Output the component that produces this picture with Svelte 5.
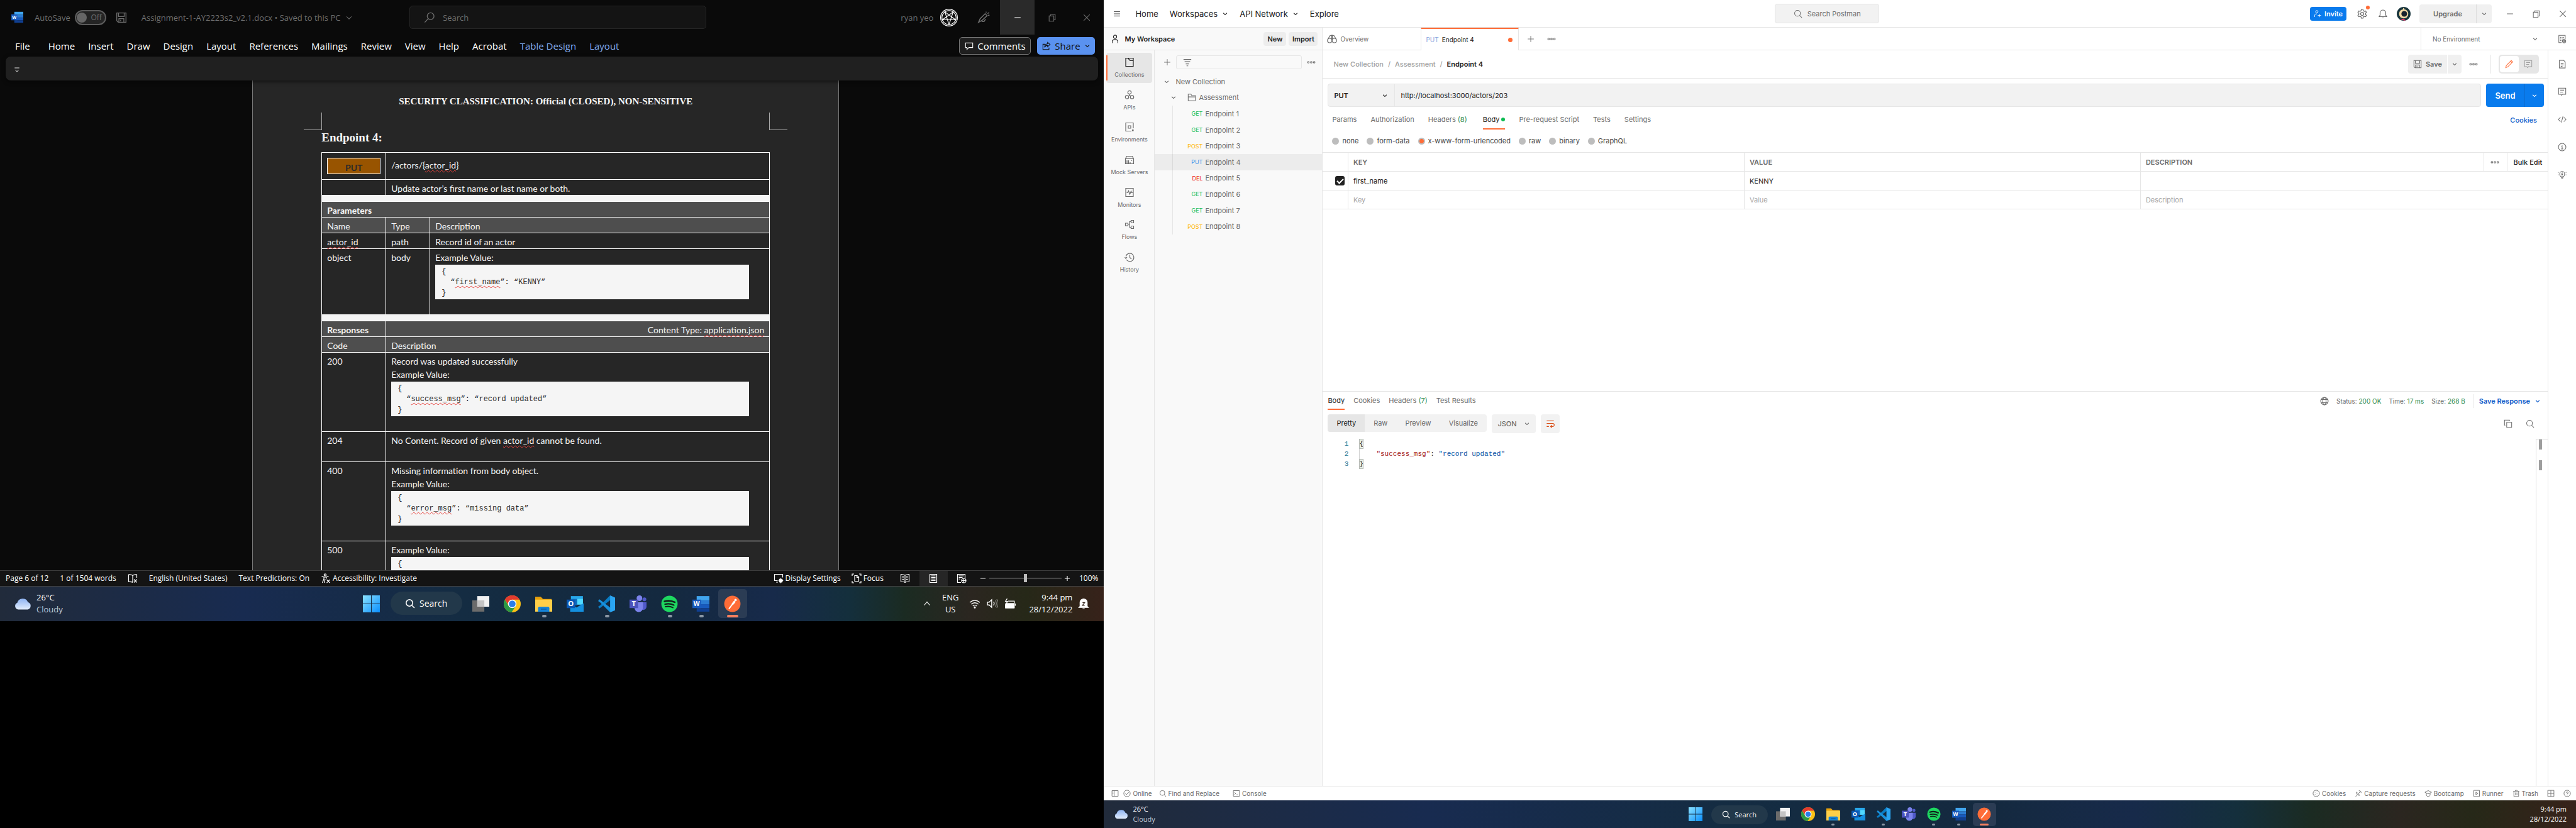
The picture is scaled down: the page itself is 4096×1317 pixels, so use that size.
<script>
  const glyphs = {
    chev: '<path d="M3.5 6l4.5 4.5L12.5 6"/>',
    up: '<path d="M3 11l5-6 5 6"/>',
    search: '<circle cx="7" cy="7" r="5.2"/><path d="M11 11l4 4"/>',
    lsearch: '<circle cx="9.5" cy="6" r="4.8"/><path d="M6 9.500L1.200 14.800"/>',
    floppy: '<path d="M1.500 1.500h13v13h-11l-2-2zM4 1.500v5h8v-5M4.500 14.500v-5h7v5M7 11v2"/>',
    pen: '<path d="M3.500 9.500L10 3l2.500 2.500-6.500 6L1.500 14zM5.500 13h3l2-3M11 1.500l.5-1M13 3l2-1.500M13.500 5h2"/>',
    restore: '<path d="M2.500 5h8.500v9.500H2.500zM5 5V2.500h8.500v9.500H11"/>',
    close: '<path d="M2.500 2.500l11 11M13.500 2.500l-11 11"/>',
    min: '<path d="M2.500 8h11"/>',
    comment: '<path d="M1.500 2.500h13v8.500H7.500L4 14.500V11H1.500z"/>',
    share: '<path d="M6 5H1.500v9.500h11V11M10 1.500l4.500 4-4.500 4V7C7.500 7 6 8 4.500 10.500 4.800 6.500 7 4.500 10 4z"/>',
    pull: '<path d="M3 4h10M4.500 8L8 12l3.500-4"/>',
    proof: '<path d="M8 3.500V14M8 3.500C6 1.500 3.500 2 1.500 2v11.500c2 0 4.500-.5 6.500 1M8 3.500C10 1.500 12 2 14.500 2v5M10 9.500l4.500 5M14.500 9.500l-4.500 5"/>',
    access: '<circle cx="7" cy="2.500" r="1.700"/><path d="M1.500 4.500L5 6v3l-2.500 6M12.500 4.500L9 6v2.500M5 6h4M7 9l-1.500 6M9.500 10l5 5M14.500 10l-5 5"/>',
    display: '<path d="M6.500 11.500h-5v-10h13v5M4 14h3"/><circle cx="11.500" cy="11.500" r="2.500"/><path d="M11.500 7.500v8M7.800 11.500h7.500M9 9l5 5M14 9l-5 5"/>',
    focus: '<path d="M1 4V1h3M12 1h3v3M1 12v3h3M15 12v3h-3M5 3.500h4l2.500 2.500v6.500H5zM8.500 3.500v3h3"/>',
    read: '<path d="M8 3v11.500M8 3C6 1.500 4 1.500 1.500 1.500V13C4 13 6 13 8 14.500M8 3c2-1.500 4-1.500 6.500-1.500V13c-2.500 0-4.500 0-6.500 1.500M3.500 4.500H6M3.500 7H6M3.500 9.500H6M10 4.500h2.500M10 7h2.500M10 9.500h2.500"/>',
    print: '<path d="M2.500 1.500h11v13h-11zM4.500 4h7M4.500 6.500h7M4.500 9h7M4.500 11.500h7"/>',
    web: '<path d="M7 14.500H1.500v-13h12V7M3.500 4h8M3.500 6.500h6M3.500 9H6"/><circle cx="11.500" cy="11.500" r="3.500"/><path d="M8 11.500h7M11.500 8v7"/>',
    wifi: '<path d="M1 6.500a10 10 0 0 1 14 0M3 9a7 7 0 0 1 10 0M5.200 11.500a4 4 0 0 1 5.600 0"/><circle cx="8" cy="13.500" r=".8" fill="currentColor"/>',
    vol: '<path d="M1 6h2.500L7 2.500v11L3.500 10H1zM9.500 5.500a4 4 0 0 1 0 5"/><path opacity=".4" d="M12 3.500a7 7 0 0 1 0 9M14 2a9 9 0 0 1 0 12"/>',
    bat: '<path fill="currentColor" d="M2 8h11v6H2z"/><path d="M5 4.500h9v9.500H1.500V9M15.500 8v3M4 1L1.500 5h3L2.500 8.500"/>',
    bell: '<path fill="currentColor" d="M3 12V6.500a5 5 0 0 1 10 0V12l1.500 1.500h-13z"/><path d="M6.500 15.500h3"/><path stroke="#3a2a20" d="M6.500 6.500h3l-3 4h3"/>',
    burger: '<path d="M1.500 3.500h13M1.500 8h13M1.500 12.500h13"/>',
    plus: '<path d="M8 1.500v13M1.500 8h13"/>',
    dots: '<circle cx="2.700" cy="8" r="1.500"/><circle cx="8" cy="8" r="1.500"/><circle cx="13.300" cy="8" r="1.500"/>',
    user: '<circle cx="8" cy="4" r="3"/><path d="M3 15.500v-3c0-2 1.500-3.500 5-3.500s5 1.500 5 3.500v3"/>',
    filter: '<path d="M1 3h14M3 7h10M5 11h6M6.500 14.500h3"/>',
    collection: '<path d="M2 1.500h12v13H2zM5.500 1.500L9 5.500h5"/>',
    api: '<circle cx="8" cy="4" r="2.700"/><circle cx="4" cy="11.500" r="2.700"/><circle cx="12" cy="11.500" r="2.700"/><path d="M8 6.700v1.500M6.700 9.500L8 8.200l1.300 1.300"/>',
    env: '<path d="M14 10V1.500H2v13h9M6 6h4v4H6z"/><path fill="currentColor" d="M12.500 12.500h1.500V14h-1.500z"/>',
    mock: '<path d="M1.500 6.500h13v8h-13zM1.500 6.500l2-4h9l2 4M4 9v5M6.500 9v5M9 12v2M11.500 9v1"/>',
    monitor: '<path d="M2 1.500h12v13H2zM3.500 8.500h1.500l1.500-3 2 5.500 2-5 1 2.500H13"/>',
    flows: '<path d="M1.500 6h4v4h-4zM10.500 1.500h4v4h-4zM10.500 10.500h4v4h-4zM5.500 8H8M10.500 3.500H8v9h2.500"/>',
    history: '<path d="M3 12a6.500 6.500 0 1 0-.8-5.500M.5 8l1.500 2 2-2M8.500 4v4.500L11 11"/>',
    folder: '<path d="M1.500 14V2h5l1.500 2.500h6.500V14zM1.500 7h13"/>',
    overview: '<circle cx="4.300" cy="10.500" r="3.500"/><circle cx="11.700" cy="10.500" r="3.500"/><path d="M1.500 8.500L4.500 3l3-1v7M14.500 8.500L11.500 3l-3-1v7"/>',
    invite: '<circle cx="6.500" cy="3.500" r="2.500"/><path d="M2 14.500V11c0-2 2-3 4.500-3M12 8v7M8.500 11.500h7"/>',
    gear: '<circle cx="8" cy="8" r="2.500"/><path d="M6.700 1h2.600l.5 2 1.700 1 2-.6 1.300 2.200L13.300 7v2l1.500 1.400-1.300 2.200-2-.6-1.700 1-.5 2H6.700l-.5-2-1.700-1-2 .6-1.300-2.200L2.700 9V7L1.200 5.600l1.300-2.200 2 .6 1.700-1z"/>',
    alarm: '<path d="M2 12.500h12L12.500 10V6.500a4.500 4.500 0 0 0-9 0V10zM6.500 14.500h3"/>',
    envdoc: '<path d="M7 14.500H2v-13h11.500V8M4.500 5h2M8.500 5H11M4.500 8h2M8.500 8h2M4.500 11h2"/><circle cx="11.500" cy="12" r="3"/><circle cx="11.500" cy="12" r="1"/>',
    doc: '<path d="M3 1h7.500L13.500 4v11H3zM5.500 7h5M5.500 9.500h5M5.500 12h3"/>',
    note: '<path d="M1.500 1.500h13v11H8.500L7 14.500l-1.500-2h-4zM4.500 5h7M4.500 8.500h5"/>',
    code: '<path d="M5 4L1 8l4 4M11 4l4 4-4 4M9.500 2.500l-3 11"/>',
    info: '<circle cx="8" cy="8" r="6.800"/><path d="M6.500 7H8v4.500M6 11.500h4M8 4.200v1.200"/>',
    bulb: '<path d="M5.500 11.500C4 10 3.500 8.500 3.500 6.500a4.500 4.500 0 0 1 9 0c0 2-.5 3.500-2 5zM6 13.500h4M6.500 15.500h3M8.500 4L7 7h2L7.500 9.500M.5 3.500l1 .5M.5 8h1M15.500 3.500l-1 .5M15.500 8h-1"/>',
    pencil: '<path d="M1.500 14.500l1-4 9-9 2.500 2.500-9 9zM10 3l2.500 2.500"/>',
    globe: '<circle cx="8" cy="8" r="6.800"/><ellipse cx="8" cy="8" rx="3" ry="6.800"/><path d="M2 5h12M2 11h12"/>',
    copy: '<path d="M5.500 5.500h9v9h-9zM3 10.500H1.500v-9h9V3"/>',
    wrap: '<path d="M1.500 2.500h13M1.500 7.500h11a2.500 2.500 0 0 1 0 5.500H9M11 10.500L8.500 13l2.500 2.500M1.500 13h4"/>',
    panel: '<path d="M1.500 2h13v12h-13zM6 2v12M3 5h1.500M3 8h1.500"/>',
    check: '<circle cx="8" cy="8" r="6.800"/><path d="M4.500 8l2.500 2.500 4.500-5"/>',
    console: '<path d="M1.500 2h13v12h-13zM4 5.500L6.500 8 4 10.500M8 11h4"/>',
    cookie: '<circle cx="8" cy="8" r="6.800"/><path d="M5 5.500h1M9 4.500h1M5 10h1M9 8.500h1M9 12h1"/>',
    sat: '<path d="M4 5a6 6 0 0 0 7 7zM7.500 8.500L11 5M9 2a5 5 0 0 1 5 5M2 15l3-4"/>',
    cap: '<path d="M1 5.500L8 2l7 3.500L8 9zM4 7.500V11c0 2 2 3.500 4 3.500s4-1.500 4-3.500V7.500"/>',
    run: '<path d="M2 1.500h12v13H2zM6.500 5l4 3-4 3z"/>',
    trash: '<path d="M1.500 3.500h13M6 3.500v-2h4v2M3 3.500v11h10v-11M6.500 6v6M9.500 6v6"/>',
    grid: '<path d="M1.500 1.500h13v13h-13zM8 1.500v13M1.500 8h13"/>',
    help: '<circle cx="8" cy="8" r="6.800"/><path d="M6 6.500a2 2 0 1 1 2 2.200v1M8 11.300v1"/>'
  };

  const logos = {
    start: '<defs><linearGradient id="g" x1="0" y1="0" x2="1" y2="1"><stop offset="0" stop-color="#8be2ff"/><stop offset="1" stop-color="#0a8fff"/></linearGradient></defs><path fill="url(#g)" d="M0 0h11.500v11.500H0zM12.500 0H24v11.500H12.500zM0 12.500h11.500V24H0zM12.500 12.500H24V24H12.500z"/>',
    view: '<path fill="#6b6b6b" d="M0 7h17v16H0z"/><path fill="#f2f2f2" d="M7 1h17v15H7z"/><path fill="#c4c4c4" d="M7 7h10v9H7z"/>',
    chrome: '<circle cx="12" cy="12" r="12" fill="#fbc116"/><path fill="#e33b2e" d="M1.600 6a12 12 0 0 1 20.800 0H12L7 14z"/><path fill="#2a9a45" d="M1.600 6a12 12 0 0 0 9.400 18l6-9-10 0z"/><circle cx="12" cy="12" r="6" fill="#fff"/><circle cx="12" cy="12" r="4.700" fill="#2a7de9"/>',
    files: '<path fill="#e8a20c" d="M0 2h8l3 3h12v6H0z"/><path fill="#ffcf48" d="M0 6h24v17H0z"/><path fill="#1583d8" d="M4 23v-5q0-2 2-2h12q2 0 2 2v5z"/><path stroke="#0b4f8c" d="M8 19.500h8"/>',
    outlook: '<path fill="#28a8ea" d="M6 1h17v12H6z"/><path fill="#0f6cbd" d="M6 5h9v9H6z"/><path fill="#50d9ff" d="M15 5h8v8h-8z"/><path fill="#1490df" d="M5 11l9 6 10-6v12H5z"/><path fill="#0a58b5" d="M0 6h12v12H0z"/><text x="6" y="15.500" text-anchor="middle" font-size="10" font-weight="700" fill="#fff">O</text>',
    vscode: '<path fill="#0a7cc4" d="M17 0L3 14 0 16l2 2.500L18 6z"/><path fill="#1990db" d="M17 24L3 10 0 8l2-2.500L18 18z"/><path fill="#2aa5f2" d="M17 0l7 3v18l-7 3z"/>',
    teams: '<circle cx="14" cy="4" r="4" fill="#7b83eb"/><circle cx="21" cy="5.500" r="2.700" fill="#5059c9"/><path fill="#5059c9" d="M16 9.500h8v7a5 5 0 0 1-6 4z"/><path fill="#7b83eb" d="M7 9.500h12v8a6 6 0 0 1-12 0z"/><path fill="#4b53bc" d="M0 6h12v12H0z"/><text x="6" y="15.500" text-anchor="middle" font-size="10" font-weight="700" fill="#fff">T</text>',
    spotify: '<circle cx="12" cy="12" r="11.500" fill="#1ed760"/><g fill="none" stroke="#10221a" stroke-linecap="round"><path stroke-width="2.400" d="M5 8.500q7.500-2.300 14.500 1.200"/><path stroke-width="2" d="M5.700 12.500q6.500-1.800 12.500 1.200"/><path stroke-width="1.700" d="M6.300 16q5.500-1.400 10.500 1.300"/></g>',
    word: '<path fill="#41a5ee" d="M6 1h18v6H6z"/><path fill="#2b7cd3" d="M6 7h18v5.500H6z"/><path fill="#185abd" d="M6 12.500h18V18H6z"/><path fill="#103f91" d="M6 18h18v5H6z"/><path fill="#185abd" d="M0 6h12v12H0z"/><text x="6" y="15.500" text-anchor="middle" font-size="9" font-weight="700" fill="#fff">W</text>',
    postman: '<circle cx="12" cy="12" r="11.500" fill="#ff6c37"/><path stroke="#fff" stroke-width="1.800" stroke-linecap="round" d="M7.500 18.500l5-6.500"/><path stroke="#fff" stroke-width="2.800" stroke-linecap="round" d="M12.500 12l2.500-3"/><circle cx="16.500" cy="6.500" r="1.700" fill="#fff"/>',
    cloud: '<defs><linearGradient id="c" x1="0" y1="0" x2="0" y2="1"><stop offset="0" stop-color="#8fb4f2"/><stop offset="1" stop-color="#e2edfd"/></linearGradient></defs><path fill="url(#c)" d="M5 20a5 5 0 0 1-1-9.500 8 8 0 0 1 15-1A5.500 5.500 0 0 1 19 20z"/>',
    star: '<circle cx="12" cy="12" r="12" fill="#fff"/><circle cx="12" cy="12" r="11" fill="#111"/><circle cx="12" cy="12" r="9.600" fill="none" stroke="#fff"/><path fill="none" stroke="#fff" d="M12 21.500L6.400 4.300 21 15H3L17.600 4.300z"/>',
    astro: '<circle cx="12" cy="12" r="12" fill="#17343c"/><circle cx="12" cy="12" r="8" fill="#f3d9a4"/><circle cx="13" cy="12" r="5" fill="#18222e"/><path fill="#f3d9a4" d="M11 2h2v4h-2z"/><path fill="#e8386d" d="M6 20.500q5 4 9 3l-2-2.500z"/>'
  };

  const tabs = ['Home', 'Insert', 'Draw', 'Design', 'Layout', 'References', 'Mailings', 'Review', 'View', 'Help', 'Acrobat'];
  const apps = [
    ['view', ''], ['chrome', ''], ['files', 'open'], ['outlook', ''], ['vscode', 'open'],
    ['teams', ''], ['spotify', 'open'], ['word', 'open'], ['postman', 'active']
  ];
  const rail = [
    ['Collections', 'collection'], ['APIs', 'api'], ['Environments', 'env'], ['Mock Servers', 'mock'],
    ['Monitors', 'monitor'], ['Flows', 'flows'], ['History', 'history']
  ];
  const endpoints = ['GET', 'GET', 'POST', 'PUT', 'DEL', 'GET', 'GET', 'POST'];
  const modes = ['none', 'form-data', 'x-www-form-urlencoded', 'raw', 'binary', 'GraphQL'];
  const side = ['doc', 'note', 'code', 'info', 'bulb'];
  const footRight = [['Cookies', 'cookie'], ['Capture requests', 'sat'], ['Bootcamp', 'cap'], ['Runner', 'run'], ['Trash', 'trash']];

  let mode = $state('x-www-form-urlencoded');
  let enabled = $state(true);
  let url = $state('http://localhost:3000/actors/203');
  let zoom = $state(50);
</script>

{#snippet icon(name, size = 's14')}
  <svg class="ico {size}" viewBox="0 0 16 16" aria-hidden="true">{@html glyphs[name]}</svg>
{/snippet}

{#snippet logo(name, size = '')}
  <svg class="logo {size}" viewBox="0 0 24 24" aria-hidden="true">{@html logos[name]}</svg>
{/snippet}

{#snippet sample(key, value)}
  <div class="sample">
    <div>{'{'}</div>
    {#if key}
      <div class="pair-line"><span>“</span><span class="typo">{key}</span><span>”: “{value}”</span></div>
      <div>{'}'}</div>
    {/if}
  </div>
{/snippet}

{#snippet taskbar(full)}
  <footer class="taskbar" class:small={!full}>
    <div class="weather">
      {@render logo('cloud')}
      <div><div>26°C</div><div class="dim">Cloudy</div></div>
    </div>
    <nav class="apps">
      <button class="app" aria-label="Start">{@render logo('start')}</button>
      <button class="find">{@render icon('search', 's16')}Search</button>
      {#each apps as [name, state]}
        <button class="app {state}" aria-label={name}>{@render logo(name)}</button>
      {/each}
    </nav>
    <div class="tray">
      {#if full}
        {@render icon('up', 's14')}
        <div class="lang">ENG<br />US</div>
        <div class="status-icons">{@render icon('wifi', 's18')}{@render icon('vol', 's18')}{@render icon('bat', 's18')}</div>
      {/if}
      <div class="clock">9:44 pm<br />28/12/2022</div>
      {#if full}{@render icon('bell', 's18')}{/if}
    </div>
  </footer>
{/snippet}

<div class="desktop">
  <div class="screen-left">
    <section class="word">
      <header class="title">
        <div class="title-file">
          {@render logo('word', 'l20')}
          <span>AutoSave</span>
          <button class="toggle" aria-label="AutoSave"><i></i>Off</button>
          {@render icon('floppy', 's18')}
          <span class="filename">Assignment-1-AY2223s2_v2.1.docx • Saved to this PC</span>
          {@render icon('chev', 's14')}
        </div>
        <label class="word-search">{@render icon('lsearch', 's18')}<input placeholder="Search" aria-label="Search" /></label>
        <div class="title-user">
          <span>ryan yeo</span>
          {@render logo('star', 'l28')}
          <button class="pen" aria-label="Pen">{@render icon('pen', 's20')}</button>
          <button class="win lit" aria-label="Minimise">{@render icon('min', 's14')}</button>
          <button class="win" aria-label="Restore">{@render icon('restore', 's14')}</button>
          <button class="win" aria-label="Close">{@render icon('close', 's14')}</button>
        </div>
      </header>
      <nav class="ribbon-tabs">
        <button class="file">File</button>
        {#each tabs as t}<button>{t}</button>{/each}
        <button class="ctx">Table Design</button>
        <button class="ctx">Layout</button>
        <span class="grow"></span>
        <button class="comments">{@render icon('comment')}Comments</button>
        <button class="share">{@render icon('share')}Share{@render icon('chev', 's10')}</button>
      </nav>
      <div class="ribbon"><button aria-label="Expand ribbon">{@render icon('pull', 's12')}</button></div>
      <div class="doc">
        <article class="page">
          <p class="class">SECURITY CLASSIFICATION: Official (CLOSED), NON-SENSITIVE</p>
          <div class="marks"><i class="l"></i><i class="r"></i></div>
          <h2>Endpoint 4:</h2>
          <table class="spec">
            <colgroup><col class="c1" /><col class="c2" /><col /></colgroup>
            <tbody>
              <tr class="verb"><td><span class="put">PUT</span></td><td colspan="2">/actors/&#123;<span class="typo">actor_id</span>&#125;</td></tr>
              <tr><td></td><td colspan="2">Update actor’s first name or last name or both.</td></tr>
              <tr class="band"><td colspan="3"></td></tr>
              <tr class="head"><th colspan="3">Parameters</th></tr>
              <tr class="head"><td>Name</td><td>Type</td><td>Description</td></tr>
              <tr><td><span class="typo">actor_id</span></td><td>path</td><td>Record id of an actor</td></tr>
              <tr class="t105"><td>object</td><td>body</td><td>Example Value:{@render sample('first_name', 'KENNY')}</td></tr>
              <tr class="band"><td colspan="3"></td></tr>
              <tr class="head"><th>Responses</th><td colspan="2" class="right">Content Type: <span class="typo">application.json</span></td></tr>
              <tr class="head"><td>Code</td><td colspan="2">Description</td></tr>
              <tr class="t126"><td>200</td><td colspan="2">Record was updated successfully<br />Example Value:{@render sample('success_msg', 'record updated')}</td></tr>
              <tr class="t48"><td>204</td><td colspan="2">No Content. Record of given <span class="typo">actor_id</span> cannot be found.</td></tr>
              <tr class="t126"><td>400</td><td colspan="2">Missing information from body object.<br />Example Value:{@render sample('error_msg', 'missing data')}</td></tr>
              <tr class="t126"><td>500</td><td colspan="2">Example Value:{@render sample()}</td></tr>
            </tbody>
          </table>
        </article>
      </div>
      <div class="status">
        <div class="counts">
          <span>Page 6 of 12</span><span>1 of 1504 words</span>{@render icon('proof', 's16')}
          <span>English (United States)</span><span>Text Predictions: On</span>
          <span class="pair">{@render icon('access', 's16')}Accessibility: Investigate</span>
        </div>
        <div class="views">
          <span class="pair">{@render icon('display', 's16')}Display Settings</span>
          <span class="pair foc">{@render icon('focus', 's16')}Focus</span>
          <button aria-label="Read mode">{@render icon('read', 's16')}</button>
          <button class="on" aria-label="Print layout">{@render icon('print', 's16')}</button>
          <button aria-label="Web layout">{@render icon('web', 's16')}</button>
          {@render icon('min', 's12')}
          <input type="range" bind:value={zoom} aria-label="Zoom" />
          {@render icon('plus', 's10')}
          <span class="pct">100%</span>
        </div>
      </div>
    </section>
    {@render taskbar(true)}
  </div>

  <div class="screen-right">
    <section class="postman">
      <header class="top">
        <nav>
          {@render icon('burger', 's12')}
          <a href="#home" class="home">Home</a>
          <a href="#ws">Workspaces {@render icon('chev', 's10')}</a>
          <a href="#api">API Network {@render icon('chev', 's10')}</a>
          <a href="#explore">Explore</a>
        </nav>
        <button class="pm-search">{@render icon('search')}Search Postman</button>
        <div class="acct">
          <button class="invite">{@render icon('invite', 's12')}Invite</button>
          <span class="gear">{@render icon('gear', 's16')}</span>
          {@render icon('alarm', 's16')}
          {@render logo('astro', 'l22')}
          <div class="upgrade"><button>Upgrade</button><button aria-label="Plans">{@render icon('chev', 's10')}</button></div>
          <button class="ctl" aria-label="Minimise">{@render icon('min')}</button>
          <button class="ctl" aria-label="Restore">{@render icon('restore')}</button>
          <button class="ctl" aria-label="Close">{@render icon('close')}</button>
        </div>
      </header>

      <aside class="sidebar">
        <div class="ws">{@render icon('user')}<b>My Workspace</b><button>New</button><button>Import</button></div>
        <div class="ws-body">
          <nav class="rail">
            {#each rail as [name, g], i}
              <button class:on={i === 0}>{@render icon(g, 's16')}<span>{name}</span></button>
            {/each}
          </nav>
          <div class="tree">
            <div class="tree-bar">
              <button aria-label="Add">{@render icon('plus', 's12')}</button>
              <label>{@render icon('filter')}<input aria-label="Filter" /></label>
              <button aria-label="More">{@render icon('dots')}</button>
            </div>
            <div class="rows">
              <button class="n0">{@render icon('chev', 's10')}New Collection</button>
              <button class="n1">{@render icon('chev', 's10')}{@render icon('folder')}<span>Assessment</span></button>
              {#each endpoints as m, i}
                <button class="ep" class:sel={i === 3}><span class="m {m}">{m}</span>Endpoint {i + 1}</button>
              {/each}
            </div>
          </div>
        </div>
      </aside>

      <main>
        <div class="tabbar">
          <button class="tab">{@render icon('overview', 's16')}Overview</button>
          <button class="tab cur"><span class="PUT">PUT</span>Endpoint 4<i></i></button>
          <button class="sq" aria-label="New tab">{@render icon('plus', 's12')}</button>
          <button class="sq" aria-label="Tabs">{@render icon('dots')}</button>
          <span class="fill"></span>
          <button class="noenv">No Environment{@render icon('chev', 's10')}</button>
          <button class="eye" aria-label="Environment">{@render icon('envdoc')}</button>
        </div>
        <div class="work">
          <div class="panes">
            <section class="request">
              <div class="crumbs">
                <span>New Collection</span><i>/</i><span>Assessment</span><i>/</i><b>Endpoint 4</b>
                <span class="grow"></span>
                <button class="save">{@render icon('floppy')}Save</button>
                <button class="save-more" aria-label="Save options">{@render icon('chev', 's10')}</button>
                <button class="more" aria-label="More">{@render icon('dots')}</button>
                <div class="modes"><button class="on" aria-label="Edit">{@render icon('pencil')}</button><button aria-label="Comments">{@render icon('note')}</button></div>
              </div>
              <div class="url">
                <div class="urlbox">
                  <label><select aria-label="Method"><option>PUT</option></select>{@render icon('chev', 's10')}</label>
                  <input bind:value={url} aria-label="Request URL" />
                </div>
                <div class="send"><button>Send</button><button aria-label="Send options">{@render icon('chev', 's10')}</button></div>
              </div>
              <div class="rtabs">
                <button>Params</button><button>Authorization</button><button>Headers <em>(8)</em></button>
                <button class="on">Body<i></i></button><button>Pre-request Script</button><button>Tests</button><button>Settings</button>
                <span class="grow"></span><a href="#cookies">Cookies</a>
              </div>
              <div class="radios">
                {#each modes as m}
                  <label><input type="radio" name="mode" value={m} bind:group={mode} />{m}</label>
                {/each}
              </div>
              <table class="kv">
                <colgroup><col class="k0" /><col class="k1" /><col class="k1" /><col /><col class="k4" /><col class="k5" /></colgroup>
                <thead>
                  <tr><th></th><th>KEY</th><th>VALUE</th><th>DESCRIPTION</th><th class="ctr">{@render icon('dots')}</th><th class="ctr"><button>Bulk Edit</button></th></tr>
                </thead>
                <tbody>
                  <tr>
                    <td><input type="checkbox" bind:checked={enabled} aria-label="Enable row" /></td>
                    <td><input value="first_name" aria-label="Key" /></td><td><input value="KENNY" aria-label="Value" /></td>
                    <td colspan="3"><input aria-label="Description" /></td>
                  </tr>
                  <tr>
                    <td></td><td><input placeholder="Key" aria-label="New key" /></td><td><input placeholder="Value" aria-label="New value" /></td>
                    <td colspan="3"><input placeholder="Description" aria-label="New description" /></td>
                  </tr>
                </tbody>
              </table>
            </section>

            <section class="response">
              <div class="stabs">
                <button class="on">Body</button><button>Cookies</button><button>Headers <em>(7)</em></button><button>Test Results</button>
                <span class="grow"></span>
                <div class="stats">
                  {@render icon('globe')}
                  <span>Status: <em>200 OK</em></span><span>Time: <em>17 ms</em></span><span>Size: <em>268 B</em></span>
                  <button class="saver">Save Response {@render icon('chev', 's10')}</button>
                </div>
              </div>
              <div class="fmt">
                <div class="seg"><button class="on">Pretty</button><button>Raw</button><button>Preview</button><button>Visualize</button></div>
                <button class="json">JSON {@render icon('chev', 's10')}</button>
                <button class="wrap" aria-label="Wrap lines">{@render icon('wrap')}</button>
                <span class="grow"></span>
                <button aria-label="Copy">{@render icon('copy')}</button>
                <button aria-label="Search">{@render icon('search')}</button>
              </div>
              <div class="code">
                <div class="nums"><div>1</div><div>2</div><div>3</div></div>
                <div class="lines">
                  <div><mark>{'{'}</mark></div>
                  <div class="in"><span class="key">"success_msg"</span>: <span class="str">"record updated"</span></div>
                  <div><mark>{'}'}</mark></div>
                </div>
                <div class="map"><i></i><i></i></div>
              </div>
            </section>
          </div>
          <nav class="side">
            {#each side as s}<button aria-label={s}>{@render icon(s)}</button>{/each}
          </nav>
        </div>
      </main>

      <footer class="foot">
        <button aria-label="Sidebar">{@render icon('panel', 's12')}</button>
        <button>{@render icon('check', 's12')}Online</button>
        <button class="fr">{@render icon('search', 's12')}Find and Replace</button>
        <button class="con">{@render icon('console', 's12')}Console</button>
        <span class="grow"></span>
        {#each footRight as [name, g]}<button>{@render icon(g, 's12')}{name}</button>{/each}
        <button aria-label="Layout">{@render icon('grid', 's12')}</button>
        <button aria-label="Help">{@render icon('help', 's12')}</button>
      </footer>
    </section>
    {@render taskbar(false)}
  </div>
</div>

<style>
  :global(body) { margin: 0; background: #000; }
  .desktop { display: grid; grid-template-columns: minmax(0, 3fr) minmax(0, 4fr); height: 100vh; overflow: hidden; box-sizing: border-box; }
  .desktop :global(*) { box-sizing: border-box; }
  button, input, select { font: inherit; color: inherit; background: none; border: 0; padding: 0; margin: 0; outline: 0; min-width: 0; }
  button { display: inline-flex; align-items: center; justify-content: center; white-space: nowrap; }
  a { color: inherit; text-decoration: none; }
  em, i { font-style: normal; }
  .grow { flex: 1; }
  .ico { fill: none; stroke: currentColor; stroke-width: 1.2; flex: none; display: block; }
  .s10 { width: 10px; height: 10px; stroke-width: 1.8; }
  .s12 { width: 12px; height: 12px; }
  .s14 { width: 14px; height: 14px; }
  .s16 { width: 16px; height: 16px; }
  .s18 { width: 18px; height: 18px; }
  .s20 { width: 20px; height: 20px; }
  .logo { display: block; flex: none; width: 27px; height: 27px; font-family: "Open Sans", sans-serif; }
  .logo.l20 { width: 19px; height: 19px; }
  .logo.l22 { width: 22px; height: 22px; }
  .logo.l28 { width: 28px; height: 28px; }

  .screen-left { display: grid; grid-template-rows: minmax(0, 17fr) minmax(0, 1fr) minmax(0, 6fr); min-height: 0; height: 100vh; background: #000; font-family: "Open Sans", sans-serif; }
  .screen-right { display: grid; grid-template-rows: minmax(0, 1fr) 44px; height: 100vh; }

  /* Word */
  .word { display: grid; grid-template-rows: 55px 35px 38px minmax(0, 1fr) 25px; background: #0a0a0a; color: #fff; min-height: 0; }
  .title { display: grid; grid-template-columns: 651fr 472fr 632fr; align-items: center; color: #6e6e6e; font-size: 13px; }
  .title-file { display: flex; align-items: center; padding-left: 18px; gap: 7px; white-space: nowrap; }
  .title-file .logo { margin-right: 11px; }
  .toggle { width: 50px; height: 24px; border: 2px solid #5c5c5c; border-radius: 12px; background: #242424; justify-content: space-between; padding: 0 5px 0 1px; font-size: 12px; margin-right: 8px; }
  .toggle i { width: 16px; height: 16px; border-radius: 50%; background: #666; }
  .filename { margin-left: 16px; }
  .word-search { height: 37px; display: flex; align-items: center; gap: 12px; padding-left: 22px; background: #141414; border: 1px solid #262626; border-radius: 5px; }
  .word-search input { flex: 1; }
  input::placeholder { color: inherit; opacity: 1; }
  .title-user { display: flex; align-items: center; justify-content: flex-end; height: 55px; }
  .title-user .logo { margin: 0 31px 0 11px; }
  .pen { margin-right: 16px; }
  .win { width: 55px; height: 55px; }
  .lit { background: #2a2a2a; color: #fff; }
  .ribbon-tabs { display: flex; align-items: center; gap: 21px; padding: 0 14px 0 24px; font-size: 15px; }
  .file { margin-right: 8px; }
  .ctx { color: #82aaf0; }
  .comments { height: 28px; width: 114px; gap: 6px; border: 1px solid #777; border-radius: 5px; background: #1f1f1f; margin-right: -11px; }
  .share { height: 28px; width: 92px; gap: 6px; border-radius: 5px; background: #5a92f0; color: #111; }
  .ribbon { margin: 0 9px; background: #202020; border-radius: 8px; display: flex; align-items: center; padding: 4px 0 0 12px; z-index: 1; box-shadow: 0 2px 6px #0008; }
  .doc { display: flex; justify-content: center; padding-right: 20px; overflow: hidden; border-bottom: 1px solid #3c3c3c; }
  .page { width: 933px; height: max-content; padding: 22px 109px 0; background: #262626; border: 1px solid #777; border-width: 0 1px; color: #f5f5f5; }
  .class { margin: 0; font: bold 15px/22px "Liberation Serif", serif; text-align: center; white-space: nowrap; }
  .marks { display: flex; justify-content: space-between; margin: 7px -28px 0; }
  .marks i { width: 29px; height: 28px; border: 0 solid #aaa; border-bottom-width: 1px; }
  .marks .l { border-right-width: 1px; }
  .marks .r { border-left-width: 1px; }
  h2 { margin: 0 0 11px; font: bold 19px/24px "Liberation Serif", serif; }
  .spec { width: 100%; table-layout: fixed; border-collapse: collapse; font: 14px/21px Lato, sans-serif; }
  .c1 { width: 102px; }
  .c2 { width: 70px; }
  .spec td, .spec th { border: 1px solid #fff; padding: 3px 8px 0; vertical-align: top; text-align: left; height: 25px; }
  .spec .verb td { height: 43px; padding-top: 8px; }
  .spec .verb td:nth-child(2) { padding-top: 9px; }
  .spec .band td { height: 10px; padding: 0; background: #f5f5f5; line-height: 1px; }
  .head td, .head th { background: #4e4e4e; }
  .spec .right { text-align: right; }
  .spec .t105 td { height: 105px; }
  .spec .t126 td { height: 126px; }
  .spec .t48 td { height: 48px; }
  .put { display: flex; align-items: center; justify-content: center; height: 26px; background: #985400; border: 1px solid #fff; color: #2a2a2a; font-weight: 700; padding-top: 4px; }
  .typo { text-decoration: underline wavy #e8413c 1px; text-underline-offset: 2px; text-decoration-skip-ink: none; }
  .sample { margin: 1px 24px 0 0; height: 55px; padding: 3px 10px; background: #f5f5f5; color: #2a2a2a; font: 12px/17px "Liberation Mono", monospace; }
  .pair-line { display: flex; padding-left: 14px; white-space: pre; }
  .status { display: flex; justify-content: space-between; background: #141414; font-size: 12px; border-bottom: 1px solid #444; padding: 0 9px; white-space: nowrap; }
  .status > div { display: flex; align-items: center; gap: 18px; }
  .pair { display: flex; align-items: center; gap: 3px; }
  .views > .foc { margin-right: 16px; }
  .status .views { gap: 0; }
  .views > .pair { margin-right: 17px; }
  .views button { width: 45px; height: 24px; }
  .views button + .ico { margin-left: 5px; }
  .views .on { background: #262626; }
  .views button:nth-of-type(1) { width: 46px; margin-left: -6px; }
  input[type="range"] { appearance: none; width: 115px; height: 14px; margin: 0 4px; background: linear-gradient(#aaa, #aaa) center / 100% 1px no-repeat; }
  input[type="range"]::-webkit-slider-thumb { appearance: none; width: 5px; height: 13px; background: #bbb; }
  .pct { margin-left: 14px; }

  /* Taskbar */
  .taskbar { display: grid; grid-template-columns: 1fr auto 1fr; align-items: center; color: #fff; font-size: 13px; line-height: 19px; font-family: "Open Sans", sans-serif; background: linear-gradient(90deg, #212b3b, #182b50 22%, #142c42 42%, #14293f 60%, #172a4a 70%, #142f3c 77%, #1b2b22 82%, #2b2620 88%, #262818 93%, #37221a); min-height: 0; }
  .weather { display: flex; align-items: center; gap: 8px; padding-left: 23px; }
  .dim { color: #c2cad6; }
  .apps { display: flex; gap: 4px; }
  .app { width: 46px; height: 46px; border-radius: 5px; position: relative; }
  .find { width: 114px; height: 37px; margin: 4px 3px 0; gap: 7px; border-radius: 19px; background: #22384a; font-size: 14px; }
  .find .ico { stroke-width: 1.6; }
  .active { background: #2b3c54; }
  .open::after, .active::after { content: ""; position: absolute; bottom: 1px; left: 50%; width: 7px; height: 4px; margin-left: -3px; border-radius: 2px; background: #8c98a6; }
  .active::after { width: 18px; margin-left: -9px; background: #f8805f; }
  .tray { display: flex; align-items: center; justify-content: flex-end; padding-right: 23px; text-align: right; }
  .lang { text-align: center; margin: 0 17px; }
  .status-icons { display: flex; gap: 10px; margin-right: 21px; }
  .clock + .ico { margin-left: 9px; }
  .small { font-size: 11px; line-height: 16px; }
  .small .logo { width: 22px; height: 22px; }
  .small .weather { padding-left: 17px; gap: 7px; }
  .small .apps { gap: 3px; }
  .small .app { width: 37px; height: 37px; }
  .small .find { width: 90px; height: 30px; margin-top: 4px; font-size: 11px; }
  .small .find .ico { width: 13px; height: 13px; }
  .small .open::after { width: 5px; height: 3px; }
  .small .active::after { width: 14px; height: 3px; margin-left: -7px; }
  .small .tray { padding-right: 15px; }

  /* Postman */
  .postman { display: grid; grid-template: 44px minmax(0, 1fr) 23px / 348px minmax(0, 1fr); background: #fff; font-family: Inter, sans-serif; font-size: 11px; color: #6b6b6b; min-height: 0; }
  .top { grid-column: 1 / -1; display: grid; grid-template-columns: 1067fr 166px 1108fr; align-items: center; border-bottom: 1px solid #e6e6e6; }
  .top nav { display: flex; align-items: center; gap: 18px; padding-left: 15px; font-size: 13px; color: #212121; }
  .top nav a { display: flex; align-items: center; gap: 7px; }
  .top .home { margin-left: 5px; }
  .pm-search { height: 31px; gap: 8px; background: #f2f2f2; border: 1px solid #e6e6e6; border-radius: 4px; }
  .acct { display: flex; align-items: center; justify-content: flex-end; padding-right: 14px; gap: 14px; }
  .invite { width: 58px; height: 22px; gap: 5px; background: #097bed; color: #fff; font-weight: 600; border-radius: 4px; }
  .gear { position: relative; margin: 0 3px; }
  .gear::after { content: ""; position: absolute; right: -4px; top: -5px; width: 6px; height: 6px; border-radius: 50%; background: #ff6c37; }
  .upgrade { display: flex; height: 30px; background: #f0f0f0; border-radius: 4px; font-weight: 600; margin-right: -6px; }
  .upgrade button:first-child { width: 91px; border-right: 1px solid #ddd; }
  .upgrade button:last-child { width: 24px; }
  .ctl { margin-left: 14px; }
  .sidebar { display: grid; grid-template-rows: 36px minmax(0, 1fr); background: #f9f9f9; border-right: 1px solid #e6e6e6; }
  .ws { display: flex; align-items: center; padding: 0 7px 0 11px; gap: 4px; border-bottom: 1px solid #e6e6e6; color: #212121; }
  .ws b { font-weight: 600; flex: 1; padding-left: 4px; }
  .ws button { height: 22px; background: #ededed; border-radius: 4px; font-weight: 600; width: 46px; }
  .ws b + button { width: 36px; }
  .ws-body { display: grid; grid-template-columns: 80px minmax(0, 1fr); }
  .rail { display: grid; grid-template-rows: repeat(7, 1fr); height: 358px; margin: 4px 3px 0 4px; row-gap: 4px; }
  .rail button { flex-direction: column; gap: 6px; font-size: 9px; line-height: 12px; border-radius: 4px; position: relative; }
  .rail .on { background: #e6e6e6; color: #212121; }
  .rail .on span { color: #6b6b6b; }
  .rail .on::before { content: ""; position: absolute; left: 0; top: 4px; bottom: 4px; width: 2px; background: #ff6c37; }
  .tree { border-left: 1px solid #e6e6e6; }
  .tree-bar { display: flex; align-items: center; padding: 8px 10px 7px 14px; gap: 8px; }
  .tree-bar label { flex: 1; display: flex; align-items: center; height: 22px; border: 1px solid #e6e6e6; border-radius: 3px; padding-left: 10px; }
  .tree-bar input { width: 0; flex: 1; }
  .rows { display: grid; grid-template-rows: repeat(10, 1fr); height: 256px; background: linear-gradient(#e6e6e6, #e6e6e6) 28px 51px / 1px 205px no-repeat; }
  .rows button { justify-content: flex-start; }
  .n0 { padding-left: 14px; gap: 9px; }
  .n1 { padding-left: 25px; gap: 17px; }
  .n1 span { margin-left: -13px; }
  .ep { gap: 4px; }
  .ep.sel { background: #0000000d; }
  .m { width: 76px; text-align: right; font-size: 9px; }
  .GET { color: #0cbb52; }
  .POST { color: #ffb400; }
  .PUT { color: #3d93ea; }
  .DEL { color: #eb2013; }

  main { display: grid; grid-template-rows: 36px minmax(0, 1fr); min-width: 0; }
  .tabbar { display: flex; font-size: 10px; }
  .tabbar > * { border-bottom: 1px solid #e6e6e6; }
  .tab { width: 156px; justify-content: flex-start; padding-left: 7px; gap: 5px; }
  .tabbar .cur { border: 1px solid #e6e6e6; border-width: 2px 1px 0; border-top-color: #ff6c37; padding-right: 9px; color: #212121; }
  .cur .PUT { color: #8aa4dd; }
  .cur i { margin-left: auto; width: 7px; height: 7px; border-radius: 50%; background: #ff6c37; }
  .sq { width: 37px; }
  .sq + .sq { width: 30px; }
  .tabbar .fill { flex: 1; }
  .noenv { width: 202px; border-left: 1px solid #e6e6e6; justify-content: space-between; padding: 0 15px 0 18px; }
  .eye { width: 45px; }
  .work { display: grid; grid-template-columns: minmax(0, 1fr) 45px; }
  .side { border-left: 1px solid #e6e6e6; display: flex; flex-direction: column; }
  .side button { height: 44px; }
  .panes { display: grid; grid-template-rows: 542fr 628fr; min-height: 0; }
  .crumbs { display: flex; align-items: center; height: 45px; border-bottom: 1px solid #e6e6e6; padding: 0 14px 0 17px; color: #a0a0a0; font-weight: 500; }
  .crumbs > i { margin: 0 7px; }
  .crumbs b { color: #212121; font-weight: 600; }
  .save { width: 62px; height: 30px; gap: 6px; background: #f0f0f0; border-radius: 4px 0 0 4px; color: #6b6b6b; font-weight: 600; }
  .save-more { width: 22px; height: 30px; background: #f0f0f0; border-radius: 0 4px 4px 0; margin-left: 1px; color: #6b6b6b; }
  .more { width: 47px; height: 30px; border-right: 1px solid #e6e6e6; margin-right: 12px; color: #6b6b6b; padding-right: 8px; }
  .modes { display: flex; height: 30px; padding: 2px; background: #e6e6e6; border-radius: 5px; }
  .modes button { width: 30px; }
  .modes .on { background: #fff; color: #ff6c37; border-radius: 4px; }
  .url { display: flex; gap: 8px; padding: 8px 6px 0 8px; height: 45px; }
  .urlbox { flex: 1; display: flex; background: #f2f2f2; border: 1px solid #e6e6e6; border-radius: 4px; color: #212121; }
  .urlbox label { width: 106px; display: flex; align-items: center; justify-content: space-between; padding: 0 10px 0 9px; border-right: 1px solid #e6e6e6; font-weight: 600; }
  select { appearance: none; flex: 1; }
  .urlbox > input { flex: 1; padding-left: 9px; }
  .send { display: flex; background: #097bed; color: #fff; border-radius: 4px; font-size: 13px; font-weight: 600; }
  .send button:first-child { width: 62px; border-right: 1px solid #0a6bd0; }
  .send button:last-child { width: 30px; }
  .rtabs { display: flex; align-items: center; gap: 22px; height: 36px; padding: 6px 17px 0 15px; }
  .rtabs button, .stabs > button { height: 100%; border-bottom: 2px solid transparent; white-space: pre; }
  .rtabs button:nth-child(3) { margin-right: 3px; }
  em { color: #2d8a4e; }
  .rtabs .on, .stabs .on { border-color: #ff6c37; color: #212121; }
  .rtabs i { width: 6px; height: 6px; margin-left: 3px; border-radius: 50%; background: #0cbb52; }
  .rtabs a { color: #0f5cc9; font-weight: 500; }
  .radios { display: flex; align-items: center; gap: 13px; height: 36px; padding-left: 15px; color: #444; }
  .radios label { display: flex; align-items: center; gap: 5px; }
  input[type="radio"] { appearance: none; width: 11px; height: 11px; border-radius: 50%; background: #bdbdbd; }
  input[type="radio"]:checked { background: radial-gradient(circle, #ff6c37 3px, #bdbdbd 4px); }
  .kv { width: 100%; table-layout: fixed; border-collapse: collapse; }
  .kv th, .kv td { height: 30px; padding: 0 0 0 8px; border: 1px solid #e6e6e6; text-align: left; font-weight: 400; color: #212121; }
  .kv tr > :first-child { border-left: 0; }
  .kv tr > :last-child { border-right: 0; }
  .kv th { font-weight: 600; color: #6b6b6b; }
  .kv td input { width: 90%; display: block; }
  .kv input::placeholder { color: #a6a6a6; }
  .k0 { width: 40px; }
  .k1 { width: 630px; }
  .k4 { width: 37px; }
  .k5 { width: 65px; }
  .kv .ctr button { color: #212121; font-weight: 500; }
  .kv .ctr { padding-left: 10px; }
  .kv td input[type="checkbox"] { appearance: none; width: 15px; height: 15px; margin-left: 12px; border-radius: 3px; background: #212121; position: relative; }
  .kv input[type="checkbox"]:checked::after { content: ""; position: absolute; left: 5px; top: 2px; width: 4px; height: 8px; border: solid #fff; border-width: 0 2px 2px 0; transform: rotate(45deg); }

  .response { border-top: 1px solid #e6e6e6; display: grid; grid-template-rows: 29px 46px minmax(0, 1fr); }
  .stabs { display: flex; gap: 14px; padding: 0 11px 0 8px; }
  .stats { display: flex; align-items: center; gap: 12px; font-size: 10px; }
  .saver { color: #0f5cc9; font-size: 11px; font-weight: 600; height: 22px; gap: 7px; border-left: 1px solid #e6e6e6; padding-left: 9px; }
  .fmt { display: flex; align-items: flex-start; gap: 8px; padding: 7px 21px 0 8px; }
  .seg { display: flex; background: #f2f2f2; border-radius: 4px; overflow: hidden; }
  .seg button { height: 28px; padding: 0 14px; }
  .seg .on { background: #e6e6e6; color: #212121; }
  .fmt > button { height: 30px; }
  .json, .wrap { background: #f2f2f2; border-radius: 4px; }
  .json { width: 70px; gap: 11px; font-weight: 500; }
  .wrap { width: 30px; color: #d94a12; }
  .fmt > button:last-child { margin-left: 13px; }
  .code { display: grid; grid-template-columns: 41px minmax(0, 1fr) 19px; font: 11px/16px "Liberation Mono", monospace; color: #212121; }
  .nums { text-align: right; color: #237893; }
  .lines { padding-left: 17px; }
  .lines .in { padding-left: 26px; border-left: 1px solid #d3d3d3; white-space: pre; }
  mark { background: #e8f0e8; color: inherit; outline: 1px solid #b5b9b5; outline-offset: -1px; display: inline-block; }
  .key { color: #a31515; }
  .str { color: #0451a5; }
  .map { border: 1px solid #dcdcdc; border-width: 1px 0 0 1px; padding-left: 4px; }
  .map i { display: block; width: 5px; height: 16px; margin-bottom: 17px; background: #9e9e9e; }

  .foot { grid-column: 1 / -1; display: flex; align-items: center; gap: 14px; padding: 0 8px 0 12px; border-top: 1px solid #e6e6e6; font-size: 10px; }
  .foot button { gap: 3px; }
  .foot button:first-child { margin-right: -7px; }
  .fr { margin-left: -3px; }
  .con { margin-left: 7px; }
</style>
